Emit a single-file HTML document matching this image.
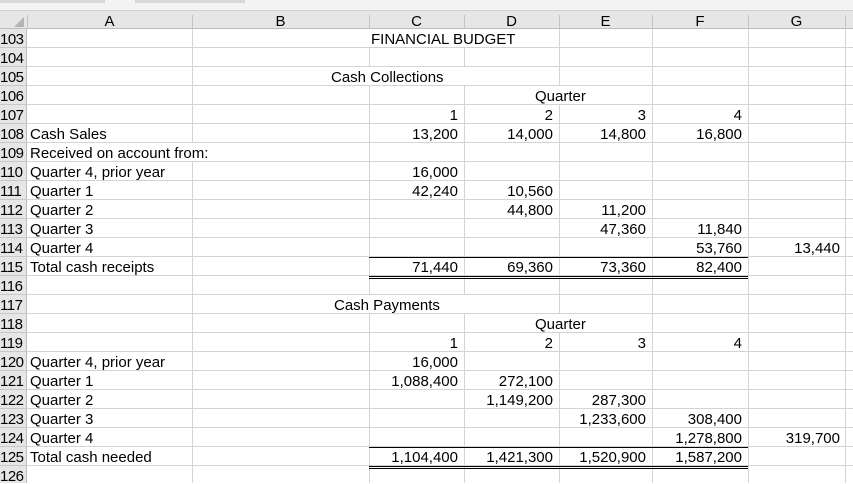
<!DOCTYPE html>
<html><head><meta charset="utf-8"><style>
*{margin:0;padding:0;box-sizing:border-box}
body{width:853px;height:483px;overflow:hidden;background:#fff;position:relative;font-family:"Liberation Sans",Arial,sans-serif;font-size:15px;color:#000}
.top{position:absolute;left:0;top:0;width:853px;height:11px;background:#f3f3f3;border-bottom:1px solid #d0d0d0}
.hdr{position:absolute;left:0;top:11px;width:853px;height:18px;background:#e6e6e6;border-bottom:1px solid #bcbcbc}
.hl{position:absolute;top:11px;height:18px;text-align:center;line-height:21px;font-size:15px}
.rh{position:absolute;left:0;top:29px;width:27px;height:454px;background:#e6e6e6;border-right:1px solid #bcbcbc}
.grid{position:absolute;left:27px;top:29px;width:826px;height:454px;background:repeating-linear-gradient(to bottom,transparent 0,transparent 18px,#d4d4d4 18px,#d4d4d4 19px)}
.rhg{position:absolute;left:0;top:29px;width:27px;height:454px;background:repeating-linear-gradient(to bottom,transparent 0,transparent 18px,#c8c8c8 18px,#c8c8c8 19px)}
.v{position:absolute;top:29px;width:1px;height:454px;background:#d4d4d4}
.vh{position:absolute;top:15px;width:1px;height:14px;background:#c4c4c4}
.n{position:absolute;left:0;width:27px;height:18px;line-height:21px;font-size:15px;text-align:left;letter-spacing:-0.5px;overflow:hidden}
.t{position:absolute;height:18px;line-height:21px;white-space:nowrap;background:#fff;overflow:hidden}
.r{position:absolute;height:18px;line-height:21px;white-space:nowrap;text-align:right;overflow:hidden}
.bl{position:absolute;left:369px;width:379px;height:1px;background:#000}
</style></head><body>
<div class="top"></div>
<div style="position:absolute;left:0;top:0;width:105px;height:3px;background:#d8d8d8"></div>
<div style="position:absolute;left:135px;top:0;width:110px;height:3px;background:#d8d8d8"></div>
<div class="hdr"></div>
<svg style="position:absolute;left:14px;top:17px" width="10" height="10"><polygon points="10,0 10,10 0,10" fill="#b4b4b4"/></svg>
<div class="vh" style="left:27px"></div><div class="vh" style="left:192px"></div><div class="vh" style="left:369px"></div><div class="vh" style="left:464px"></div><div class="vh" style="left:559px"></div><div class="vh" style="left:652px"></div><div class="vh" style="left:748px"></div><div class="vh" style="left:845px"></div>
<div class="hl" style="left:27px;width:165px">A</div>
<div class="hl" style="left:192px;width:177px">B</div>
<div class="hl" style="left:369px;width:95px">C</div>
<div class="hl" style="left:464px;width:95px">D</div>
<div class="hl" style="left:559px;width:93px">E</div>
<div class="hl" style="left:652px;width:96px">F</div>
<div class="hl" style="left:748px;width:97px">G</div>
<div class="rh"></div><div class="rhg"></div>
<div class="grid"></div>
<div class="v" style="left:192px"></div><div class="v" style="left:369px"></div><div class="v" style="left:464px"></div><div class="v" style="left:559px"></div><div class="v" style="left:652px"></div><div class="v" style="left:748px"></div><div class="v" style="left:845px"></div>

<div class="n" style="top:29px">103</div><div class="n" style="top:48px">104</div><div class="n" style="top:67px">105</div><div class="n" style="top:86px">106</div><div class="n" style="top:105px">107</div><div class="n" style="top:124px">108</div><div class="n" style="top:143px">109</div><div class="n" style="top:162px">110</div><div class="n" style="top:181px">111</div><div class="n" style="top:200px">112</div><div class="n" style="top:219px">113</div><div class="n" style="top:238px">114</div><div class="n" style="top:257px">115</div><div class="n" style="top:276px">116</div><div class="n" style="top:295px">117</div><div class="n" style="top:314px">118</div><div class="n" style="top:333px">119</div><div class="n" style="top:352px">120</div><div class="n" style="top:371px">121</div><div class="n" style="top:390px">122</div><div class="n" style="top:409px">123</div><div class="n" style="top:428px">124</div><div class="n" style="top:447px">125</div><div class="n" style="top:466px">126</div>

<div class="t" style="top:29px;left:369px;width:190px;padding-left:2px">FINANCIAL BUDGET</div>
<div class="t" style="top:67px;left:193px;width:366px;padding-left:138px">Cash Collections</div>
<div class="t" style="top:86px;left:465px;width:187px;padding-left:70px">Quarter</div>
<div class="t" style="top:143px;left:28px;width:341px;padding-left:2px">Received on account from:</div>
<div class="t" style="top:295px;left:193px;width:366px;padding-left:141px">Cash Payments</div>
<div class="t" style="top:314px;left:465px;width:187px;padding-left:70px">Quarter</div>

<div class="t" style="top:124px;left:30px">Cash Sales</div>
<div class="t" style="top:162px;left:30px">Quarter 4, prior year</div>
<div class="t" style="top:181px;left:30px">Quarter 1</div>
<div class="t" style="top:200px;left:30px">Quarter 2</div>
<div class="t" style="top:219px;left:30px">Quarter 3</div>
<div class="t" style="top:238px;left:30px">Quarter 4</div>
<div class="t" style="top:257px;left:30px">Total cash receipts</div>
<div class="t" style="top:352px;left:30px">Quarter 4, prior year</div>
<div class="t" style="top:371px;left:30px">Quarter 1</div>
<div class="t" style="top:390px;left:30px">Quarter 2</div>
<div class="t" style="top:409px;left:30px">Quarter 3</div>
<div class="t" style="top:428px;left:30px">Quarter 4</div>
<div class="t" style="top:447px;left:30px">Total cash needed</div>

<div class="r" style="top:105px;right:395px">1</div><div class="r" style="top:105px;right:300px">2</div><div class="r" style="top:105px;right:207px">3</div><div class="r" style="top:105px;right:111px">4</div>
<div class="r" style="top:124px;right:395px">13,200</div><div class="r" style="top:124px;right:300px">14,000</div><div class="r" style="top:124px;right:207px">14,800</div><div class="r" style="top:124px;right:111px">16,800</div>
<div class="r" style="top:162px;right:395px">16,000</div>
<div class="r" style="top:181px;right:395px">42,240</div><div class="r" style="top:181px;right:300px">10,560</div>
<div class="r" style="top:200px;right:300px">44,800</div><div class="r" style="top:200px;right:207px">11,200</div>
<div class="r" style="top:219px;right:207px">47,360</div><div class="r" style="top:219px;right:111px">11,840</div>
<div class="r" style="top:238px;right:111px">53,760</div><div class="r" style="top:238px;right:13px">13,440</div>
<div class="r" style="top:257px;right:395px">71,440</div><div class="r" style="top:257px;right:300px">69,360</div><div class="r" style="top:257px;right:207px">73,360</div><div class="r" style="top:257px;right:111px">82,400</div>

<div class="r" style="top:333px;right:395px">1</div><div class="r" style="top:333px;right:300px">2</div><div class="r" style="top:333px;right:207px">3</div><div class="r" style="top:333px;right:111px">4</div>
<div class="r" style="top:352px;right:395px">16,000</div>
<div class="r" style="top:371px;right:395px">1,088,400</div><div class="r" style="top:371px;right:300px">272,100</div>
<div class="r" style="top:390px;right:300px">1,149,200</div><div class="r" style="top:390px;right:207px">287,300</div>
<div class="r" style="top:409px;right:207px">1,233,600</div><div class="r" style="top:409px;right:111px">308,400</div>
<div class="r" style="top:428px;right:111px">1,278,800</div><div class="r" style="top:428px;right:13px">319,700</div>
<div class="r" style="top:447px;right:395px">1,104,400</div><div class="r" style="top:447px;right:300px">1,421,300</div><div class="r" style="top:447px;right:207px">1,520,900</div><div class="r" style="top:447px;right:111px">1,587,200</div>

<div class="bl" style="top:257px"></div><div class="bl" style="top:276px"></div><div class="bl" style="top:278px"></div>
<div class="bl" style="top:447px"></div><div class="bl" style="top:466px"></div><div class="bl" style="top:468px"></div>
</body></html>
